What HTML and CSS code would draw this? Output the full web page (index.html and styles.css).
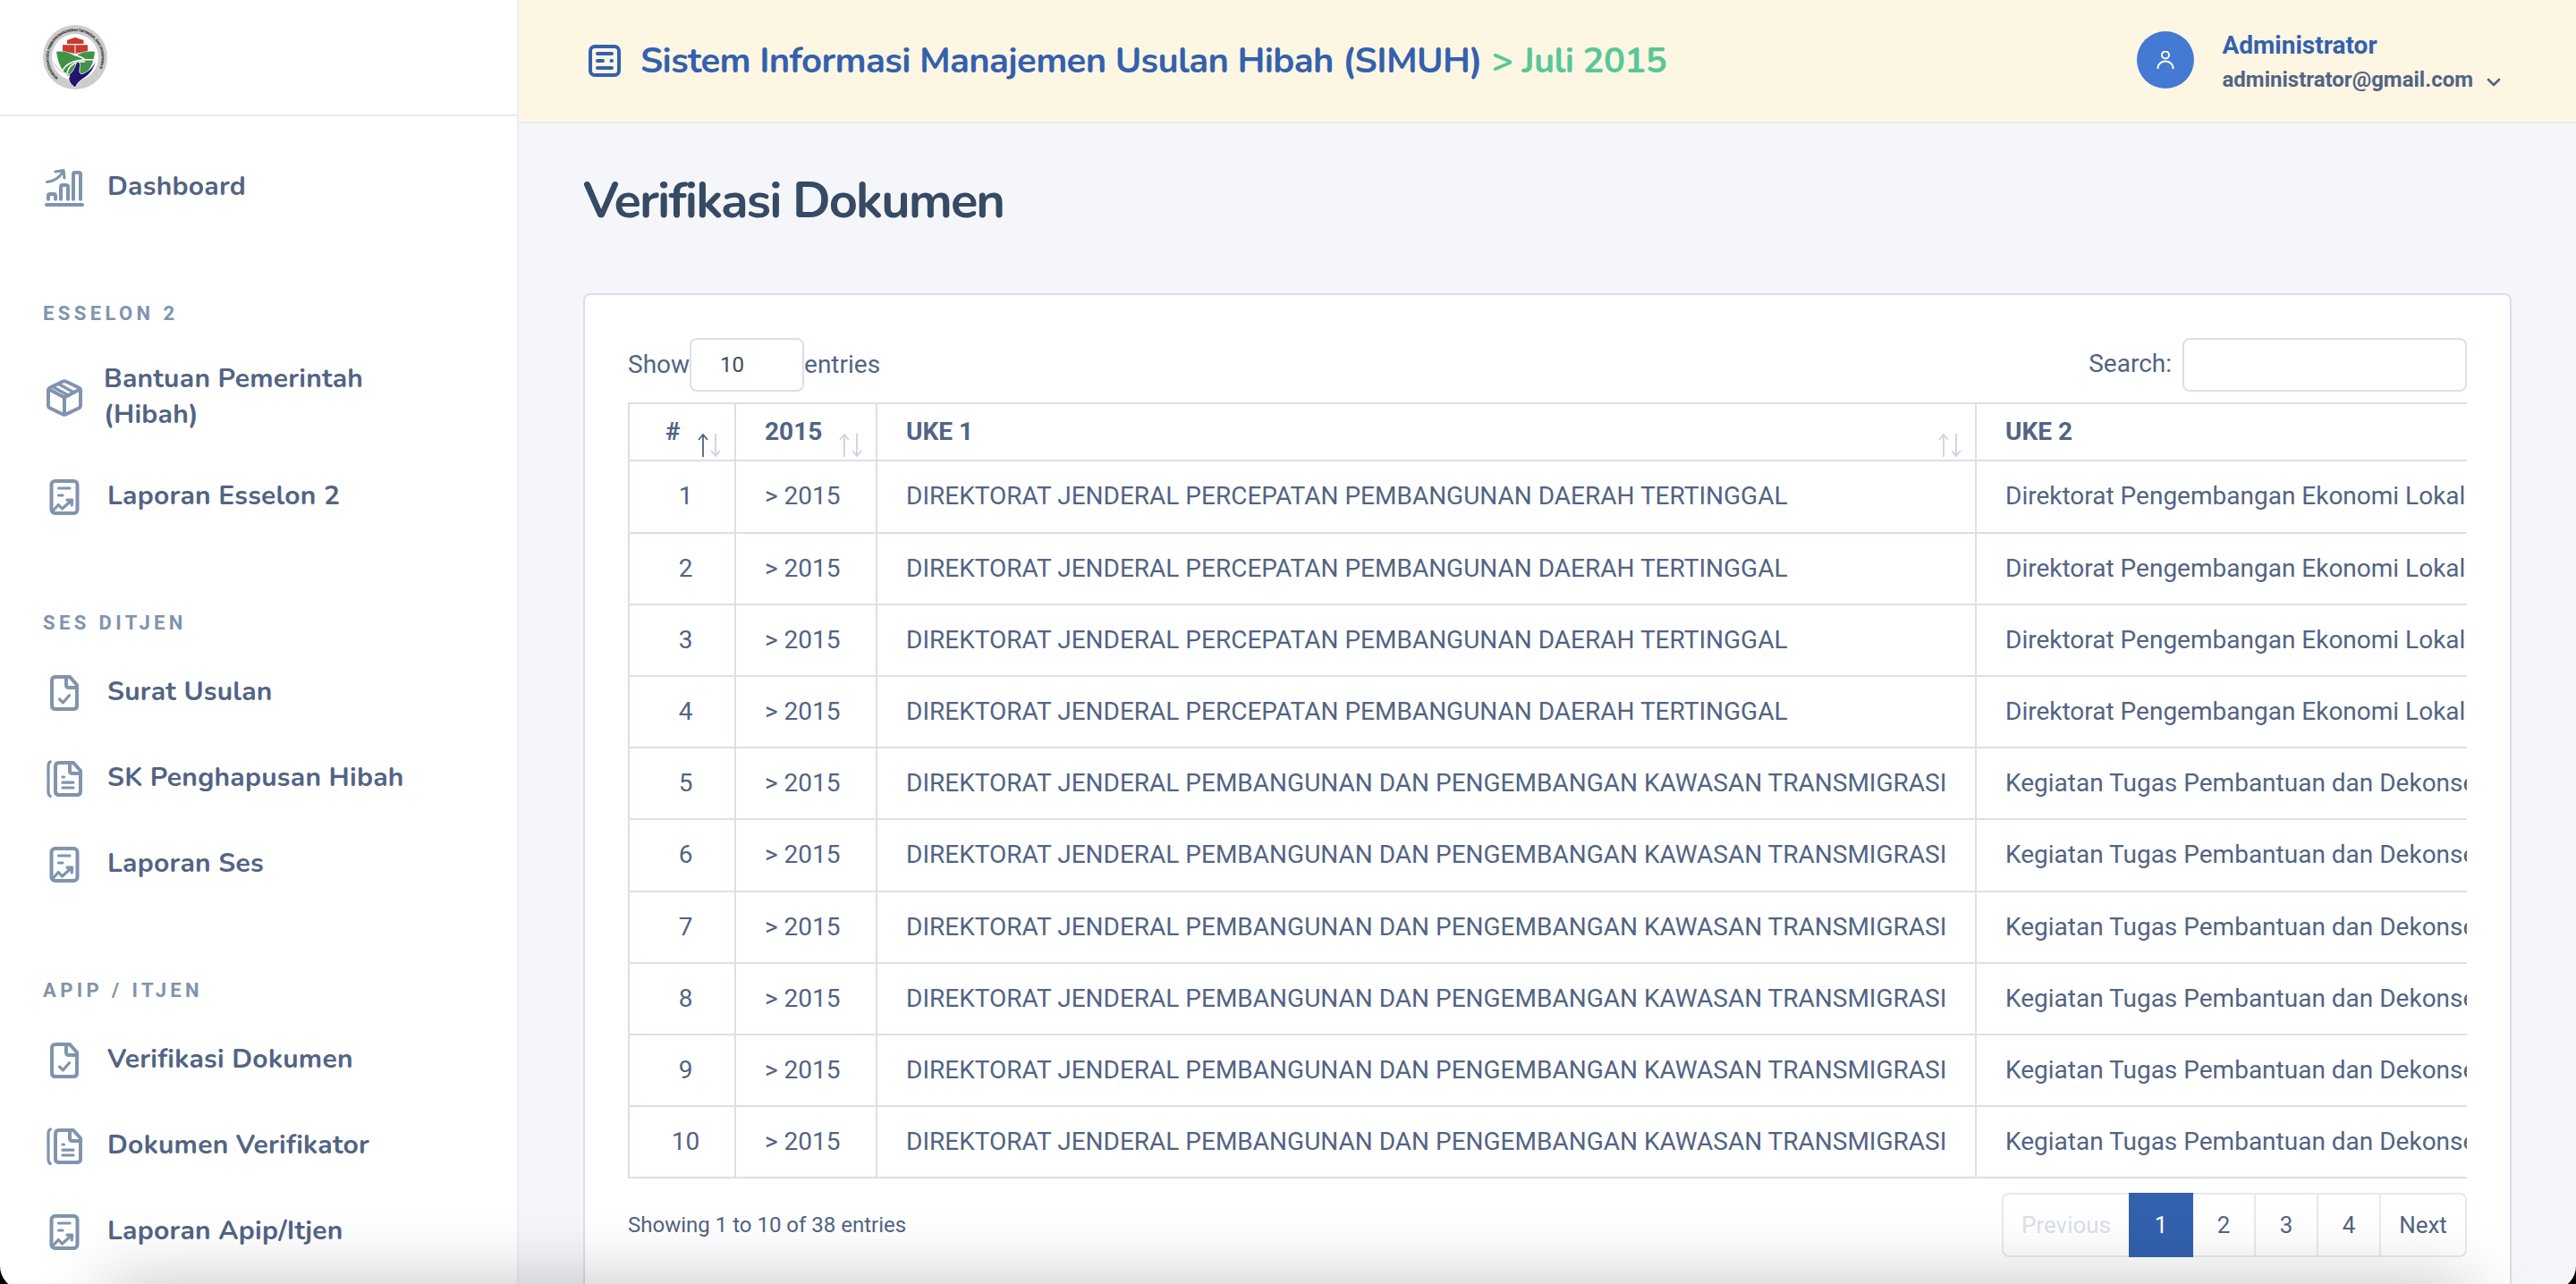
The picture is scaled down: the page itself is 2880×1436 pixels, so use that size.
FILE: index.html
```html
<!DOCTYPE html>
<html lang="id">
<head>
<meta charset="utf-8">
<title>SIMUH - Verifikasi Dokumen</title>
<link rel="stylesheet" href="styles.css">
</head>
<body>
<svg class="sprite" aria-hidden="true">
  <symbol id="i-growth" viewBox="0 0 44 44">
    <path d="M2 41h40M4 34.700V31q0-2 2-2h4q2 0 2 2v3.700M18 34.700V21q0-2 2-2h4q2 0 2 2v13.700M32 34.700V7q0-2 2-2h4q2 0 2 2v27.700"/>
    <path class="fine" d="M2.500 15.500Q14 14.500 20.500 4M12 4l9-1.500 1 8.500"/>
  </symbol>
  <symbol id="i-package" viewBox="0 0 44 44">
    <path d="M20.500 3.500Q22 2.800 23.500 3.500L38 10.500Q40 11.500 40 13.500V30.500Q40 32.500 38 33.500L23.500 40.500Q22 41.200 20.500 40.500L6 33.500Q4 32.500 4 30.500V13.500Q4 11.500 6 10.500ZM5 12.500l17 9 17-9M22 22v18"/>
    <path class="fine" d="M10.500 10.500l16.500 9M16.500 7l16.500 9"/>
  </symbol>
  <symbol id="i-report" viewBox="0 0 44 44">
    <rect x="7.500" y="4" width="29" height="36" rx="4"/>
    <path class="fine" d="M15.500 12h12.500M15.500 20h4.500M9.500 37l5.800-6.500 4.200 4.500 10-9M25 25.200h5.700l-.5 5.800"/>
  </symbol>
  <symbol id="i-check" viewBox="0 0 44 44">
    <path d="M28 4H12q-4 0-4 4v28q0 4 4 4h20q4 0 4-4V13ZM24 4v9q0 3 3 3h9"/>
    <path class="fine" d="M16.500 29l4 3.800 7-8"/>
  </symbol>
  <symbol id="i-docs" viewBox="0 0 44 44">
    <path d="M32 4H16q-4 0-4 4v28q0 4 4 4h20q4 0 4-4V13ZM28 4v9q0 3 3 3h9"/>
    <path class="fine" d="M20 20h1.500M20 26.200h12M20 32h12M6.300 3Q4 4 4 7.500v29q0 3.500 2.300 5"/>
  </symbol>
  <symbol id="i-sort" viewBox="0 0 26 26">
    <path class="up" d="M6 26V2M1 7l5-6 5 6"/><path class="down" d="M20 0v24M15 19l5 6 5-6"/>
  </symbol>
</svg>

<div class="app">
  <aside class="sidebar">
    <div class="brand">
      <svg class="logo" viewBox="0 0 72 72">
        <circle cx="36" cy="36" r="36" fill="#cdcdcd"/><circle cx="36" cy="36" r="26" fill="#fff"/>
        <path id="ring" d="M17 59A29.500 29.500 0 1 1 55 59" fill="none"/>
        <text class="ring-text"><textPath href="#ring" textLength="130">KEMENTERIAN DESA, PEMBANGUNAN DAERAH TERTINGGAL, DAN TRANSMIGRASI</textPath></text>
        <path fill="#cb3a2a" d="M27 17L36 13.700l9.500 3.300v4H27zM22 22.300h13.500V32L22 29zM36.500 22.300H50V29l-13.500 3z"/>
        <path fill="#409347" d="M15 29.700q12-1 21 5 9-6 22-5-1 14-8 22l-9 5H28q-10-7-13-27z"/>
        <path fill="none" stroke="#fff" stroke-width="1.400" d="M21 53q6-16 36-14M27 54q3-14 20-13M36 33.500q7 2 11 5"/>
        <path fill="#24146c" stroke="#fff" stroke-width=".8" d="M11 38.500q5 13 17 16.500h2q4-3 8-14 5 0 3 8-1 5 2 6 12-4 17-17-3 15-15 22-6 3-9 10-10-7-6-14Q14 52 11 38.500z"/>
      </svg>
    </div>
    <nav class="menu">
      <a class="item"><svg class="ico"><use href="#i-growth"/></svg><span>Dashboard</span></a>
      <h6 class="heading">ESSELON 2</h6>
      <a class="item two"><svg class="ico"><use href="#i-package"/></svg><span>Bantuan Pemerintah<br>(Hibah)</span></a>
      <a class="item"><svg class="ico"><use href="#i-report"/></svg><span>Laporan Esselon 2</span></a>
      <h6 class="heading">SES DITJEN</h6>
      <a class="item"><svg class="ico"><use href="#i-check"/></svg><span>Surat Usulan</span></a>
      <a class="item"><svg class="ico"><use href="#i-docs"/></svg><span>SK Penghapusan Hibah</span></a>
      <a class="item"><svg class="ico"><use href="#i-report"/></svg><span>Laporan Ses</span></a>
      <h6 class="heading">APIP / ITJEN</h6>
      <a class="item"><svg class="ico"><use href="#i-check"/></svg><span>Verifikasi Dokumen</span></a>
      <a class="item"><svg class="ico"><use href="#i-docs"/></svg><span>Dokumen Verifikator</span></a>
      <a class="item"><svg class="ico"><use href="#i-report"/></svg><span>Laporan Apip/Itjen</span></a>
    </nav>
  </aside>

  <div class="main">
    <header class="topbar">
      <svg class="title-ico" viewBox="0 0 36 36"><rect x="2" y="2" width="32" height="32" rx="5"/><path d="M10 10h16M10 18h6M25.500 18h.5M10 26h16"/></svg>
      <div class="app-title"><span class="name">Sistem Informasi Manajemen Usulan Hibah (SIMUH)</span><span class="period">&gt; Juli 2015</span></div>
      <div class="user">
        <span class="avatar"><svg viewBox="0 0 20 20"><circle cx="10" cy="4.500" r="4"/><path d="M1.500 20v-1a8.500 7.500 0 0 1 17 0v1"/></svg></span>
        <div class="who">
          <div class="user-name">Administrator</div>
          <div class="user-mail"><span>administrator@gmail.com</span><svg viewBox="0 0 16 10"><path d="M2 2l6 6 6-6"/></svg></div>
        </div>
      </div>
    </header>

    <main class="content">
      <h2 class="page-title">Verifikasi Dokumen</h2>
      <section class="card">
        <div class="tools">
          <label class="length">Show<span class="select">10</span>entries</label>
          <label class="search"><span>Search:</span><input type="text"></label>
        </div>
        <div class="scroll">
          <table class="grid">
            <colgroup><col class="c1"><col class="c2"><col class="c3"><col class="c4"></colgroup>
            <thead><tr>
              <th class="num">#<svg class="sort asc"><use href="#i-sort"/></svg></th>
              <th>2015<svg class="sort"><use href="#i-sort"/></svg></th>
              <th>UKE 1<svg class="sort"><use href="#i-sort"/></svg></th>
              <th>UKE 2</th>
            </tr></thead>
            <tbody>
              <tr class="tall"><td class="num">1</td><td>&gt; 2015</td><td>DIREKTORAT JENDERAL PERCEPATAN PEMBANGUNAN DAERAH TERTINGGAL</td><td>Direktorat Pengembangan Ekonomi Lokal</td></tr>
              <tr><td class="num">2</td><td>&gt; 2015</td><td>DIREKTORAT JENDERAL PERCEPATAN PEMBANGUNAN DAERAH TERTINGGAL</td><td>Direktorat Pengembangan Ekonomi Lokal</td></tr>
              <tr><td class="num">3</td><td>&gt; 2015</td><td>DIREKTORAT JENDERAL PERCEPATAN PEMBANGUNAN DAERAH TERTINGGAL</td><td>Direktorat Pengembangan Ekonomi Lokal</td></tr>
              <tr><td class="num">4</td><td>&gt; 2015</td><td>DIREKTORAT JENDERAL PERCEPATAN PEMBANGUNAN DAERAH TERTINGGAL</td><td>Direktorat Pengembangan Ekonomi Lokal</td></tr>
              <tr><td class="num">5</td><td>&gt; 2015</td><td>DIREKTORAT JENDERAL PEMBANGUNAN DAN PENGEMBANGAN KAWASAN TRANSMIGRASI</td><td>Kegiatan Tugas Pembantuan dan Dekonsentrasi</td></tr>
              <tr class="tall"><td class="num">6</td><td>&gt; 2015</td><td>DIREKTORAT JENDERAL PEMBANGUNAN DAN PENGEMBANGAN KAWASAN TRANSMIGRASI</td><td>Kegiatan Tugas Pembantuan dan Dekonsentrasi</td></tr>
              <tr><td class="num">7</td><td>&gt; 2015</td><td>DIREKTORAT JENDERAL PEMBANGUNAN DAN PENGEMBANGAN KAWASAN TRANSMIGRASI</td><td>Kegiatan Tugas Pembantuan dan Dekonsentrasi</td></tr>
              <tr><td class="num">8</td><td>&gt; 2015</td><td>DIREKTORAT JENDERAL PEMBANGUNAN DAN PENGEMBANGAN KAWASAN TRANSMIGRASI</td><td>Kegiatan Tugas Pembantuan dan Dekonsentrasi</td></tr>
              <tr><td class="num">9</td><td>&gt; 2015</td><td>DIREKTORAT JENDERAL PEMBANGUNAN DAN PENGEMBANGAN KAWASAN TRANSMIGRASI</td><td>Kegiatan Tugas Pembantuan dan Dekonsentrasi</td></tr>
              <tr><td class="num">10</td><td>&gt; 2015</td><td>DIREKTORAT JENDERAL PEMBANGUNAN DAN PENGEMBANGAN KAWASAN TRANSMIGRASI</td><td>Kegiatan Tugas Pembantuan dan Dekonsentrasi</td></tr>
            </tbody>
          </table>
        </div>
        <div class="foot">
          <div class="info">Showing 1 to 10 of 38 entries</div>
          <div class="pager"><span class="prev">Previous</span><span class="on">1</span><span>2</span><span>3</span><span>4</span><span class="next">Next</span></div>
        </div>
      </section>
    </main>
  </div>
</div>
<div class="shade"></div>
<div class="frame"></div>
</body>
</html>
```
FILE: styles.css
```css
* { box-sizing: border-box; }
html, body { margin: 0; height: 100%; overflow: hidden; }
body {
  font-family: Roboto, "Liberation Sans", sans-serif;
  font-size: 28px;
  color: #526484;
  background: #f5f6fa;
}
.sprite { display: none; }
.app { display: flex; height: 1436px; overflow: hidden; }

.sidebar { width: 580px; flex: none; background: #fff; border-right: 2px solid #ebeef5; }
.brand { height: 130px; border-bottom: 2px solid #e5e9f2; padding: 28px 48px; }
.logo { display: block; width: 72px; height: 72px; }
.ring-text { font-size: 4px; font-weight: 700; fill: #222; }
.menu { padding-top: 32px; }
.item {
  display: flex; align-items: center; height: 96px; padding-left: 50px; gap: 26px;
  font: 700 30px/40px Nunito, Lato, sans-serif; letter-spacing: .250px; color: #526484;
}
.item span { padding-bottom: 2px; }
.item.two { height: 127px; gap: 22px; }
.ico { width: 44px; height: 44px; flex: none; overflow: visible; fill: none; stroke: #8094ae; stroke-width: 4; stroke-linecap: round; stroke-linejoin: round; }
.fine { stroke-width: 3.200; }
.heading {
  margin: 0; height: 123px; padding: 80px 0 0 48px;
  font-size: 22px; line-height: 26px; font-weight: 700; letter-spacing: 4.4px; color: #8094ae;
}

.main { flex: 1; min-width: 0; display: flex; flex-direction: column; }
.topbar {
  height: 138px; flex: none; display: flex; align-items: center; background: #fdf6e3;
  border-bottom: 2px solid #e5e9f2; padding: 0 84px 0 78px;
}
.title-ico { width: 36px; height: 36px; fill: none; stroke: #3361ae; stroke-width: 4; stroke-linecap: round; stroke-linejoin: round; }
.app-title { display: flex; gap: 11px; margin-left: 22px; font: 700 40px/50px Nunito, Lato, sans-serif; letter-spacing: -.620px; color: #3361ae; white-space: nowrap; }
.period { color: #58c797; }
.user { margin-left: auto; display: flex; align-items: center; }
.avatar { width: 64px; height: 64px; margin-top: -2px; border-radius: 50%; background: #4479d4; display: flex; align-items: center; justify-content: center; }
.avatar svg { width: 20px; height: 20px; fill: none; stroke: #fff; stroke-width: 2; }
.who { margin-left: 32px; padding-top: 5px; }
.user-name { font-size: 28px; line-height: 38px; font-weight: 700; color: #3361ae; }
.user-mail { font-size: 24px; line-height: 39px; font-weight: 700; display: flex; align-items: center; }
.user-mail svg { width: 16px; height: 10px; margin: 4px 0 0 15px; fill: none; stroke: #526484; stroke-width: 2.600; stroke-linecap: round; stroke-linejoin: round; }

.content { padding: 0 72px; }
.page-title { margin: 0; height: 190px; padding-top: 53px; font: 700 56px/68px Nunito, Lato, sans-serif; letter-spacing: -1.900px; color: #364a63; }
.card { height: 1200px; background: #fff; border: 2px solid #dbdfea; border-radius: 8px; padding: 48px; }
.tools { display: flex; justify-content: space-between; height: 72px; }
.tools label { display: flex; align-items: flex-start; height: 60px; line-height: 59px; }
.select { width: 128px; height: 60px; border: 2px solid #dbdfea; border-radius: 8px; padding-left: 32px; font-size: 24px; line-height: 56px; color: #3c4d62; }
.search span { line-height: 58px; }
.search input { width: 318px; height: 60px; margin-left: 12px; border: 2px solid #dbdfea; border-radius: 8px; background: #fff; outline: 0; }

.scroll { overflow: hidden; height: 868px; }
.grid { width: 2400px; table-layout: fixed; border-collapse: separate; border-spacing: 0; border-top: 2px solid #dbdfea; border-left: 2px solid #dbdfea; }
.c1 { width: 119px; } .c2 { width: 158px; } .c3 { width: 1229px; } .c4 { width: 892px; }
th, td { padding: 0 0 0 32px; text-align: left; white-space: nowrap; border-right: 2px solid #dbdfea; border-bottom: 2px solid #dbdfea; line-height: 40px; }
th { position: relative; height: 64px; font-weight: 700; }
td { height: 80px; }
.tall td { height: 81px; padding-bottom: 1px; }
td.num { text-align: center; padding-left: 8px; }
th.num { padding-left: 40px; }
.sort { position: absolute; right: 15px; bottom: 3px; width: 26px; height: 26px; fill: none; stroke: #ccd3df; stroke-width: 1.800; }
.sort.asc { --up: #526484; }
.up { stroke: var(--up, #ccd3df); }

.foot { display: flex; justify-content: space-between; margin-top: 16px; height: 72px; }
.info { font-size: 24px; line-height: 72px; }
.pager { display: flex; width: 520px; height: 72px; border: 2px solid #e5e9f2; border-radius: 8px; font-size: 26px; line-height: 68px; text-align: center; }
.pager span { width: 70px; border-right: 2px solid #e5e9f2; }
.pager .prev { width: 140px; color: #dbdfea; border: 0; }
.pager .on { width: 72px; margin: -2px 0; line-height: 72px; background: #3361ae; color: #fff; border: 0; }
.pager .next { flex: 1; border: 0; }

/* shadow cast along the lower window edge, and the rounded window corners */
.shade { position: fixed; left: 120px; right: 120px; top: 100%; height: 100px; box-shadow: 0 0 80px rgba(0, 0, 0, .24); }
.frame { position: fixed; inset: -60px 0 -6px; border-radius: 26px; box-shadow: 0 0 0 40px #000; pointer-events: none; }
```
